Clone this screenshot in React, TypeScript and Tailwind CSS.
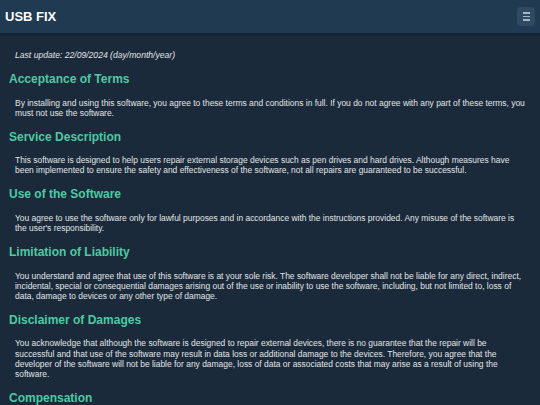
import * as React from "react"

const sections = [
  {
    title: "Acceptance of Terms",
    text: "By installing and using this software, you agree to these terms and conditions in full. If you do not agree with any part of these terms, you must not use the software.",
  },
  {
    title: "Service Description",
    text: "This software is designed to help users repair external storage devices such as pen drives and hard drives. Although measures have been implemented to ensure the safety and effectiveness of the software, not all repairs are guaranteed to be successful.",
  },
  {
    title: "Use of the Software",
    text: "You agree to use the software only for lawful purposes and in accordance with the instructions provided. Any misuse of the software is the user's responsibility.",
  },
  {
    title: "Limitation of Liability",
    text: "You understand and agree that use of this software is at your sole risk. The software developer shall not be liable for any direct, indirect, incidental, special or consequential damages arising out of the use or inability to use the software, including, but not limited to, loss of data, damage to devices or any other type of damage.",
  },
  {
    title: "Disclaimer of Damages",
    text: "You acknowledge that although the software is designed to repair external devices, there is no guarantee that the repair will be successful and that use of the software may result in data loss or additional damage to the devices. Therefore, you agree that the developer of the software will not be liable for any damage, loss of data or associated costs that may arise as a result of using the software.",
  },
  {
    title: "Compensation",
    text: "You agree to indemnify and hold harmless the developer of the software from any claim, demand, loss or damage arising out of your use of the software.",
  },
]

export default function App() {
  return (
    <div className="h-[405px] overflow-hidden bg-[#1a2a3a] font-['Liberation_Sans',Arial,sans-serif]">
      {/* Header */}
      <header className="flex h-[33px] items-center justify-between bg-[#1f3a51] pl-[5px] pr-[5px] shadow-[0_1px_2px_rgba(0,0,0,0.25)]">
        <h1 className="text-[13px] font-bold leading-[33px] text-white">USB FIX</h1>
        <button className="flex h-[19px] w-[18px] flex-col items-center justify-center gap-[2px] rounded-[4px] bg-[#2f4a62]">
          <span className="h-[1.5px] w-[7px] bg-[#aab6c2]" />
          <span className="h-[1.5px] w-[7px] bg-[#aab6c2]" />
          <span className="h-[1.5px] w-[7px] bg-[#aab6c2]" />
        </button>
      </header>

      {/* Content */}
      <main className="pl-[9px] pr-[14px] pt-[17px]">
        <p className="pl-[6px] text-[8.6px] italic leading-[10.1px] text-[#e2e4e6]">
          Last update: 22/09/2024 (day/month/year)
        </p>
        {sections.map((s) => (
          <section key={s.title}>
            <h2 className="mt-[12px] text-[12px] font-bold leading-[14px] text-[#4ec9a2]">{s.title}</h2>
            <p className="mt-[11.5px] pl-[6px] text-[8.45px] leading-[10.1px] text-[#e2e4e6]">{s.text}</p>
          </section>
        ))}
      </main>
    </div>
  )
}
